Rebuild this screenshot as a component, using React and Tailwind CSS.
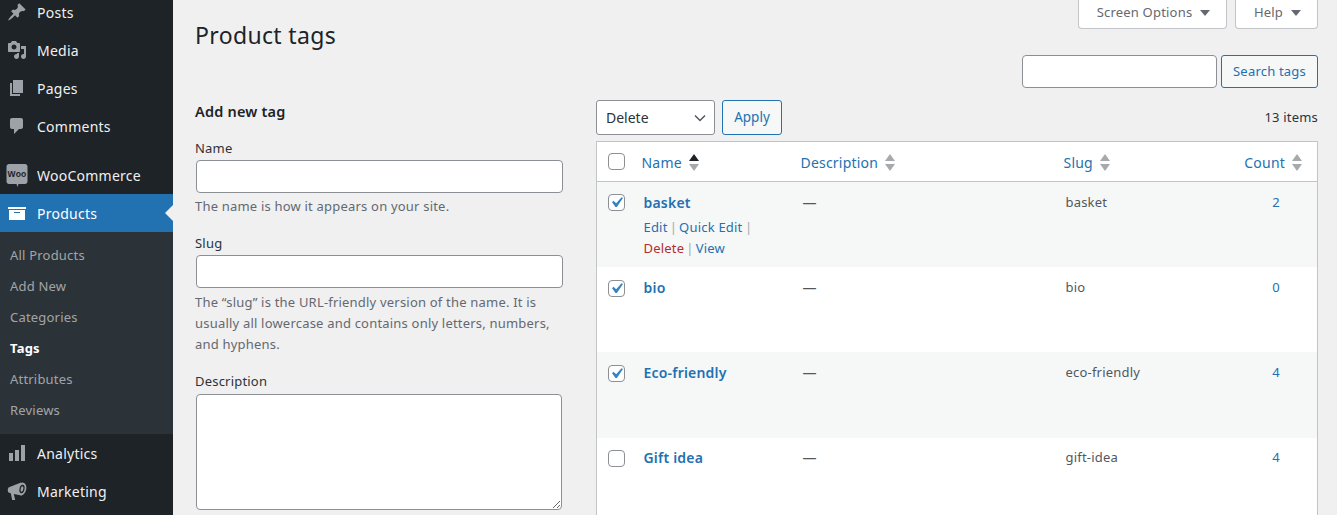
import React from "react";

const font = "font-['Noto_Sans','Open_Sans',sans-serif]";

const Ic = ({ d, active }) => (
  <svg viewBox="0 0 20 20" className={`w-5 h-5 ${active ? "fill-white" : "fill-[#9ca2a7]"}`}>
    <path d={d} />
  </svg>
);

const icons = {
  posts: "M10.44 3.02l1.82-1.82 6.36 6.35-1.83 1.82c-1.05-.68-2.48-.57-3.41.36l-.75.75c-.92.93-1.04 2.35-.35 3.41l-1.83 1.82-2.41-2.41-2.8 2.79c-.42.42-3.38 2.71-3.8 2.29s1.86-3.39 2.28-3.81l2.79-2.79L4.1 9.36l1.83-1.82c1.05.69 2.48.57 3.4-.36l.75-.75c.93-.92 1.05-2.35.36-3.41z",
  media: "M13 11V4c0-.55-.45-1-1-1h-1.67L9 1H5L3.67 3H2c-.55 0-1 .45-1 1v7c0 .55.45 1 1 1h10c.55 0 1-.45 1-1zM7 4.5c1.38 0 2.5 1.12 2.5 2.5S8.38 9.5 7 9.5 4.5 8.38 4.5 7 5.62 4.5 7 4.5zM14 6h5v10.5c0 1.38-1.12 2.5-2.5 2.5S14 17.88 14 16.5s1.12-2.5 2.5-2.5c.17 0 .34.02.5.05V9h-3V6zm-4 8.05V13h2v3.5c0 1.38-1.12 2.5-2.5 2.5S7 17.88 7 16.5 8.12 14 9.5 14c.17 0 .34.02.5.05z",
  pages: "M6 15V2h10v13H6zm-1 1h8v2H3V5h2v11z",
  comments: "M5 2h9c1.1 0 2 .9 2 2v7c0 1.1-.9 2-2 2h-2l-5 5v-5H5c-1.1 0-2-.9-2-2V4c0-1.1.9-2 2-2z",
  products: "M19 4v2H1V4h18zM2 7h16v10H2V7zm11 3V9H7v1h6z",
  analytics: "M18 18V2h-4v16h4zm-6 0V7H8v11h4zm-6 0v-8H2v8h4z",
};

const Megaphone = () => (
  <svg viewBox="0 0 20 20" className="w-5 h-5">
    <path className="fill-[#9ca2a7]" d="M14 1.500L2 6.200C.6 6.800.4 10.400 1.600 11.500L3.800 12.300 5.200 19h3L6.800 13l7.700 1.500z" />
    <ellipse cx="15" cy="8" rx="4.200" ry="6.500" transform="rotate(12 15 8)" className="fill-[#9ca2a7]" />
    <ellipse cx="15" cy="8" rx="2.500" ry="4.300" transform="rotate(12 15 8)" className="fill-[#1d2327]" />
    <ellipse cx="15" cy="8" rx="1.300" ry="2.800" transform="rotate(12 15 8)" className="fill-[#9ca2a7]" />
  </svg>
);

const MenuItem = ({ icon, label, active }) => (
  <div className={`relative h-[38px] flex items-center pl-[7px] text-[14px] ${active ? "bg-[#2271b1] text-white" : "text-[#f0f0f1]"}`}>
    <span className="w-[30px] flex">{icon}</span>
    <span className="tracking-[0.25px]">{label}</span>
    {active && (
      <span className="absolute right-0 top-[11px] w-0 h-0 border-y-[8px] border-y-transparent border-r-[8px] border-r-[#f0f0f1]" />
    )}
  </div>
);

const Woo = () => (
  <svg viewBox="0 0 22 23" className="w-[22px] h-[23px] -ml-[1px]">
    <path className="fill-[#9ca2a7]" d="M3 0h16c1.400 0 2.500 1.100 2.500 2.500v15c0 1.400-1.100 2.500-2.500 2.500h-6.500L11.500 23l-1-3H3C1.600 20 .5 18.900.5 17.500v-15C.5 1.100 1.600 0 3 0z" />
    <text x="11" y="12.500" textAnchor="middle" fontSize="8.500" fontWeight="700" fill="#1d2327" fontFamily="Liberation Sans">Woo</text>
  </svg>
);

const Sidebar = () => (
  <aside className="w-[173px] shrink-0 bg-[#1d2327] h-[515px] overflow-hidden">
    <div className="-mt-[7px]">
      <MenuItem icon={<Ic d={icons.posts} />} label="Posts" />
      <MenuItem icon={<Ic d={icons.media} />} label="Media" />
      <MenuItem icon={<Ic d={icons.pages} />} label="Pages" />
      <MenuItem icon={<Ic d={icons.comments} />} label="Comments" />
      <div className="h-[11px]" />
      <MenuItem icon={<Woo />} label="WooCommerce" />
      <MenuItem icon={<Ic d={icons.products} active />} label="Products" active />
      <div className="bg-[#2c3338] py-2 text-[13px] text-[#c3c4c7cc] tracking-[0.2px]">
        {["All Products", "Add New", "Categories", "Tags", "Attributes", "Reviews"].map((s) => (
          <div key={s} className={`h-[31px] flex items-center pl-[10px] ${s === "Tags" ? "font-bold text-white" : ""}`}>{s}</div>
        ))}
      </div>
      <MenuItem icon={<Ic d={icons.analytics} />} label="Analytics" />
      <MenuItem icon={<Megaphone />} label="Marketing" />
    </div>
  </aside>
);

const Tri = () => (
  <span className="w-0 h-0 border-x-[5px] border-x-transparent border-t-[6px] border-t-[#646970] ml-2" />
);

const inputCls = "block bg-white border border-[#8c8f94] rounded-[4px] outline-none";

const Sort = ({ up }) => (
  <svg viewBox="0 0 10 17" className="w-[10px] h-[17px] ml-[7px] shrink-0">
    <path d="M5 0l5 7H0z" className={up ? "fill-[#1d2327]" : "fill-[#a7aaad]"} />
    <path d="M5 17L0 10h10z" className="fill-[#a7aaad]" />
  </svg>
);

const Check = ({ on }) => (
  <span className="block w-[17px] h-[17px] bg-white border border-[#8c8f94] rounded-[4px]">
    {on && (
      <svg viewBox="0 0 20 20" className="w-[21px] h-[21px] -ml-[3px] -mt-[3px] fill-[#3582c4]">
        <path d="M14.830 4.890l1.340.940-5.810 8.380H9.020L5.780 9.670l1.340-1.250 2.570 2.400z" />
      </svg>
    )}
  </span>
);

const rows = [
  { name: "basket", slug: "basket", count: 2, on: true, alt: true, actions: true, h: "h-[85px]", chk: "pt-3", txt: "pt-[10px]" },
  { name: "bio", slug: "bio", count: 0, on: true, h: "h-[85px]", chk: "pt-[13px]", txt: "pt-[10px]" },
  { name: "Eco-friendly", slug: "eco-friendly", count: 4, on: true, alt: true, h: "h-[86px]", chk: "pt-[13px]", txt: "pt-[10px]" },
  { name: "Gift idea", slug: "gift-idea", count: 4, h: "h-[85px]", chk: "pt-3", txt: "pt-[9px]" },
];

const Th = ({ label, up }) => (
  <th className="font-normal p-0 px-2 align-middle">
    <span className="flex items-center text-[#2271b1] pt-[2px]">{label}<Sort up={up} /></span>
  </th>
);

const Sep = () => <span className="-mx-[1.5px]"> | </span>;

const Table = () => (
  <table className="w-full table-fixed border-collapse bg-white border border-[#c3c4c7] mt-[6px] text-[14px]">
    <colgroup>
      <col className="w-[37px]" />
      <col className="w-[159px]" />
      <col className="w-[263px]" />
      <col className="w-[166px]" />
      <col />
    </colgroup>
    <thead>
      <tr className="h-10 border-b border-[#c3c4c7]">
        <th className="p-0 pl-[11px]"><Check /></th>
        <Th label="Name" up />
        <Th label="Description" />
        <Th label="Slug" />
        <th className="font-normal p-0 pr-[15px]">
          <span className="flex items-center justify-end text-[#2271b1] pt-[2px]">Count<Sort /></span>
        </th>
      </tr>
    </thead>
    <tbody>
      {rows.map((r) => (
        <tr key={r.name} className={`${r.h} ${r.alt ? "bg-[#f6f7f7]" : "bg-white"} align-top`}>
          <td className={`p-0 pl-[11px] ${r.chk}`}><Check on={r.on} /></td>
          <td className={`p-0 pl-[10px] ${r.txt}`}>
            <div className="font-semibold text-[#2271b1] leading-[21px] tracking-[0.2px]">{r.name}</div>
            {r.actions && (
              <div className="text-[13px] leading-[21px] mt-1 text-[#a7aaad]">
                <span className="text-[#2271b1]">Edit</span><Sep /><span className="text-[#2271b1]">Quick Edit</span><span className="-ml-[1px]"> |</span>
                <br />
                <span className="text-[#b32d2e]">Delete</span><Sep /><span className="text-[#2271b1]">View</span>
              </div>
            )}
          </td>
          <td className={`p-0 pl-[10px] ${r.txt} leading-[21px] text-[#50575e]`}>—</td>
          <td className={`p-0 pl-[10px] ${r.txt} text-[13px] leading-[21px] text-[#50575e]`}>{r.slug}</td>
          <td className={`p-0 pr-[37px] ${r.txt} text-right text-[13px] leading-[21px] text-[#2271b1]`}>{r.count}</td>
        </tr>
      ))}
    </tbody>
  </table>
);

export default function App() {
  return (
    <div className={`${font} flex w-[1337px] h-[515px] overflow-hidden bg-[#f0f0f1] text-[#2c3338] text-[13px] tracking-[0.2px]`}>
      <Sidebar />
      <main className="flex-1 min-w-0 pl-[22px] pr-[19px]">
        <header className="flex justify-between items-start h-[55px]">
          <h1 className="text-[23px] leading-[30px] font-normal text-[#1d2327] mt-5 tracking-[0.35px]">Product tags</h1>
          <div className="flex gap-2">
            <div className="w-[149px] h-[29px] pb-[3px] pl-[2px] flex items-center justify-center bg-white border border-t-0 border-[#c3c4c7] rounded-b-[4px] text-[#646970]">Screen Options<Tri /></div>
            <div className="w-[83px] h-[29px] pb-[3px] pl-[2px] flex items-center justify-center bg-white border border-t-0 border-[#c3c4c7] rounded-b-[4px] text-[#646970]">Help<Tri /></div>
          </div>
        </header>
        <div className="flex justify-end gap-1 h-[33px]">
          <input aria-label="Search" className={`${inputCls} w-[195px] h-[33px]`} />
          <button className="w-[97px] h-[33px] bg-[#f6f7f7] border border-[#2271b1] rounded-[3px] text-[#2271b1]">Search tags</button>
        </div>
        <div className="flex mt-3 gap-[33px]">
          <section className="w-[368px] shrink-0">
            <h2 className="text-[14.5px] font-semibold leading-[22px] text-[#1d2327]">Add new tag</h2>
            <label className="block mt-[16px] leading-[20px] text-[#2c3338] h-[22px]">Name</label>
            <input aria-label="Name" className={`${inputCls} w-[367px] h-[33px] ml-[1px]`} />
            <p className="mt-[3px] leading-[21px] text-[#646970]">The name is how it appears on your site.</p>
            <label className="block mt-[16px] leading-[20px] h-[22px]">Slug</label>
            <input aria-label="Slug" className={`${inputCls} w-[367px] h-[33px] ml-[1px]`} />
            <p className="mt-[4px] leading-[21px] text-[#646970]">The “slug” is the URL-friendly version of the name. It is usually all lowercase and contains only letters, numbers, and hyphens.</p>
            <label className="block mt-[16px] leading-[20px] h-[23px]">Description</label>
            <textarea aria-label="Description" className={`${inputCls} w-[366px] h-[116px] ml-[1px]`} />
          </section>
          <section className="flex-1 min-w-0">
            <div className="flex items-center h-[35px]">
              <div className="w-[119px] h-[35px] flex items-center justify-between pl-[9px] pr-[8px] bg-white border border-[#8c8f94] rounded-[3px] text-[14px] tracking-normal text-[#2c3338]">
                <span>Delete</span>
                <svg viewBox="0 0 12 8" className="w-3 h-2 fill-none stroke-[#50575e] stroke-[1.5]"><path d="M1 1.500l5 5 5-5" /></svg>
              </div>
              <button className="ml-[7px] w-[60px] h-[35px] bg-[#f6f7f7] border border-[#2271b1] rounded-[3px] text-[13.5px] tracking-normal text-[#2271b1]">Apply</button>
              <span className="ml-auto">13 items</span>
            </div>
            <Table />
          </section>
        </div>
      </main>
    </div>
  );
}
